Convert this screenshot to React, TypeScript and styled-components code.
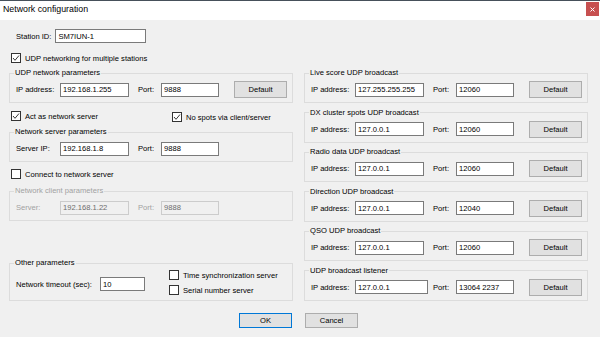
import React from "react";
import styled, { createGlobalStyle } from "styled-components";

const Global = createGlobalStyle`
  html, body { margin: 0; padding: 0; background: #f0f0f0; }
  * { box-sizing: border-box; }
`;

const FONT = `"Liberation Sans", Arial, sans-serif`;
const SIZE = "7.6px";

const Window = styled.div`
  width: 600px;
  height: 337px;
  background: #f0f0f0;
  display: flex;
  flex-direction: column;
  overflow: hidden;
  font-family: ${FONT};
  font-size: ${SIZE};
  color: #000;
`;

const TitleBar = styled.div`
  height: 20px;
  background: #fff;
  border-top: 1px solid #46505a;
  display: flex;
  align-items: flex-start;
  justify-content: space-between;
  padding-left: 3px;
`;

const TitleText = styled.div`
  font-size: 8.8px;
  line-height: 17px;
  color: #000;
`;

const CloseButton = styled.div`
  width: 13px;
  height: 14px;
  margin-top: 1px;
  margin-right: 1px;
  background: #c75050;
  display: flex;
  align-items: center;
  justify-content: center;
`;

const Body = styled.div`
  display: grid;
  grid-template-columns: 284px 284px;
  column-gap: 11px;
  padding: 9px 12px 0 9px;
`;

const LeftColumn = styled.div`
  display: flex;
  flex-direction: column;
`;

const RightColumn = styled.div`
  display: flex;
  flex-direction: column;
  justify-content: space-between;
  margin-top: 39px;
`;

const StationRow = styled.div`
  display: flex;
  align-items: center;
  gap: 4px;
  height: 14px;
  margin-left: 7px;
`;

const Text = styled.span<{ $disabled?: boolean; $w?: number; $ml?: number }>`
  white-space: nowrap;
  color: ${(p) => (p.$disabled ? "#a2a2a2" : "#000")};
  ${(p) => (p.$w ? `width: ${p.$w}px; flex: none;` : "")}
  ${(p) => (p.$ml ? `margin-left: ${p.$ml}px;` : "")}
`;

const TextBox = styled.input<{ $w: number }>`
  width: ${(p) => p.$w}px;
  height: 14px;
  flex: none;
  border: 1px solid #7a7a7a;
  background: #fff;
  padding: 0 2px;
  margin: 0;
  font-family: ${FONT};
  font-size: ${SIZE};
  color: #000;
  outline: none;
  &:disabled {
    background: #f0f0f0;
    border-color: #cccccc;
    color: #6d6d6d;
  }
`;

const CheckRow = styled.label<{ $mt?: number; $ml?: number }>`
  display: flex;
  align-items: center;
  gap: 4px;
  height: 10px;
  margin-top: ${(p) => p.$mt ?? 0}px;
  margin-left: ${(p) => p.$ml ?? 2}px;
`;

const Box = styled.span`
  width: 10px;
  height: 10px;
  flex: none;
  border: 1px solid #333;
  background: #fff;
  display: flex;
  align-items: center;
  justify-content: center;
`;

const TwoChecks = styled.div`
  display: grid;
  grid-template-columns: 161px auto;
  align-items: start;
  margin-top: 8px;
  margin-left: 2px;
`;

const Group = styled.fieldset<{ $mt?: number; $pt?: number; $pb?: number }>`
  margin: ${(p) => p.$mt ?? 0}px 0 0 0;
  padding: ${(p) => p.$pt ?? 3}px 4px ${(p) => p.$pb ?? 4}px 6px;
  border: 1px solid #dcdcdc;
  min-width: 0;
`;

const Legend = styled.legend<{ $disabled?: boolean }>`
  font-size: ${SIZE};
  line-height: 10px;
  padding: 0 1px;
  margin-left: -2px;
  color: ${(p) => (p.$disabled ? "#a2a2a2" : "#000")};
`;

const Row = styled.div`
  display: flex;
  align-items: center;
  height: 17px;
`;

const Button = styled.button<{ $h?: number; $primary?: boolean; $ml?: number }>`
  width: 53px;
  height: ${(p) => p.$h ?? 17}px;
  flex: none;
  margin: 0 0 0 ${(p) => p.$ml ?? 0}px;
  padding: 0;
  background: #e1e1e1;
  border: 1px solid ${(p) => (p.$primary ? "#0078d7" : "#adadad")};
  font-family: ${FONT};
  font-size: ${SIZE};
  color: #000;
`;

const OtherContent = styled.div`
  display: flex;
  align-items: flex-start;
  height: 25px;
`;

const TimeoutPart = styled.div`
  width: 153px;
  display: flex;
  align-items: center;
  margin-top: 7px;
`;

const CheckStack = styled.div`
  display: flex;
  flex-direction: column;
  gap: 5px;
`;

const ButtonBar = styled.div`
  grid-column: 1 / -1;
  display: flex;
  justify-content: center;
  gap: 13px;
  margin-top: 12px;
`;

const Check = () => (
  <svg width="8" height="8" viewBox="0 0 8 8">
    <polyline points="1,4 3,6.3 7,1.5" fill="none" stroke="#222" strokeWidth="0.9" />
  </svg>
);

const CheckBox = ({
  label,
  checked,
  mt,
  ml,
}: {
  label: string;
  checked?: boolean;
  mt?: number;
  ml?: number;
}) => (
  <CheckRow $mt={mt} $ml={ml}>
    <Box>{checked ? <Check /> : null}</Box>
    <Text>{label}</Text>
  </CheckRow>
);

const AddressRow = ({
  label,
  ip,
  port,
  ipWidth = 69,
  button = true,
  disabled,
}: {
  label: string;
  ip: string;
  port: string;
  ipWidth?: number;
  button?: boolean;
  disabled?: boolean;
}) => (
  <Row>
    <Text $w={44} $disabled={disabled}>{label}</Text>
    <TextBox $w={ipWidth} value={ip} readOnly disabled={disabled} />
    <Text $w={23} $ml={78 - ipWidth} $disabled={disabled}>Port:</Text>
    <TextBox $w={58} value={port} readOnly disabled={disabled} />
    {button && <Button $ml={15}>Default</Button>}
  </Row>
);

const broadcasts = [
  { title: "Live score UDP broadcast", ip: "127.255.255.255", port: "12060" },
  { title: "DX cluster spots UDP broadcast", ip: "127.0.0.1", port: "12060" },
  { title: "Radio data UDP broadcast", ip: "127.0.0.1", port: "12060" },
  { title: "Direction UDP broadcast", ip: "127.0.0.1", port: "12040" },
  { title: "QSO UDP broadcast", ip: "127.0.0.1", port: "12060" },
  { title: "UDP broadcast listener", ip: "127.0.0.1", port: "13064 2237", ipWidth: 73 },
];

export default function App() {
  return (
    <>
      <Global />
      <Window>
        <TitleBar>
          <TitleText>Network configuration</TitleText>
          <CloseButton>
            <svg width="5" height="5" viewBox="0 0 5 5">
              <path d="M0.5 0.5 L4.5 4.5 M4.5 0.5 L0.5 4.5" stroke="#fff" strokeWidth="1" />
            </svg>
          </CloseButton>
        </TitleBar>
        <Body>
          <LeftColumn>
            <StationRow>
              <Text>Station ID:</Text>
              <TextBox $w={91} value="SM7IUN-1" readOnly />
            </StationRow>
            <CheckBox label="UDP networking for multiple stations" checked mt={10} />
            <Group $mt={5}>
              <Legend>UDP network parameters</Legend>
              <AddressRow label="IP address:" ip="192.168.1.255" port="9888" />
            </Group>
            <TwoChecks>
              <CheckBox label="Act as network server" checked ml={0} />
              <CheckBox label="No spots via client/server" checked ml={0} mt={1} />
            </TwoChecks>
            <Group $mt={5}>
              <Legend>Network server parameters</Legend>
              <AddressRow label="Server IP:" ip="192.168.1.8" port="9888" button={false} />
            </Group>
            <CheckBox label="Connect to network server" mt={7} />
            <Group $mt={7}>
              <Legend $disabled>Network client parameters</Legend>
              <AddressRow label="Server:" ip="192.168.1.22" port="9888" button={false} disabled />
            </Group>
            <Group $mt={37} $pt={2} $pb={5}>
              <Legend>Other parameters</Legend>
              <OtherContent>
                <TimeoutPart>
                  <Text $w={84}>Network timeout (sec):</Text>
                  <TextBox $w={45} value="10" readOnly />
                </TimeoutPart>
                <CheckStack>
                  <CheckBox label="Time synchronization server" ml={0} />
                  <CheckBox label="Serial number server" ml={0} />
                </CheckStack>
              </OtherContent>
            </Group>
          </LeftColumn>
          <RightColumn>
            {broadcasts.map((b) => (
              <Group key={b.title}>
                <Legend>{b.title}</Legend>
                <AddressRow label="IP address:" ip={b.ip} port={b.port} ipWidth={b.ipWidth} />
              </Group>
            ))}
          </RightColumn>
          <ButtonBar>
            <Button $h={15} $primary>OK</Button>
            <Button $h={15}>Cancel</Button>
          </ButtonBar>
        </Body>
      </Window>
    </>
  );
}
